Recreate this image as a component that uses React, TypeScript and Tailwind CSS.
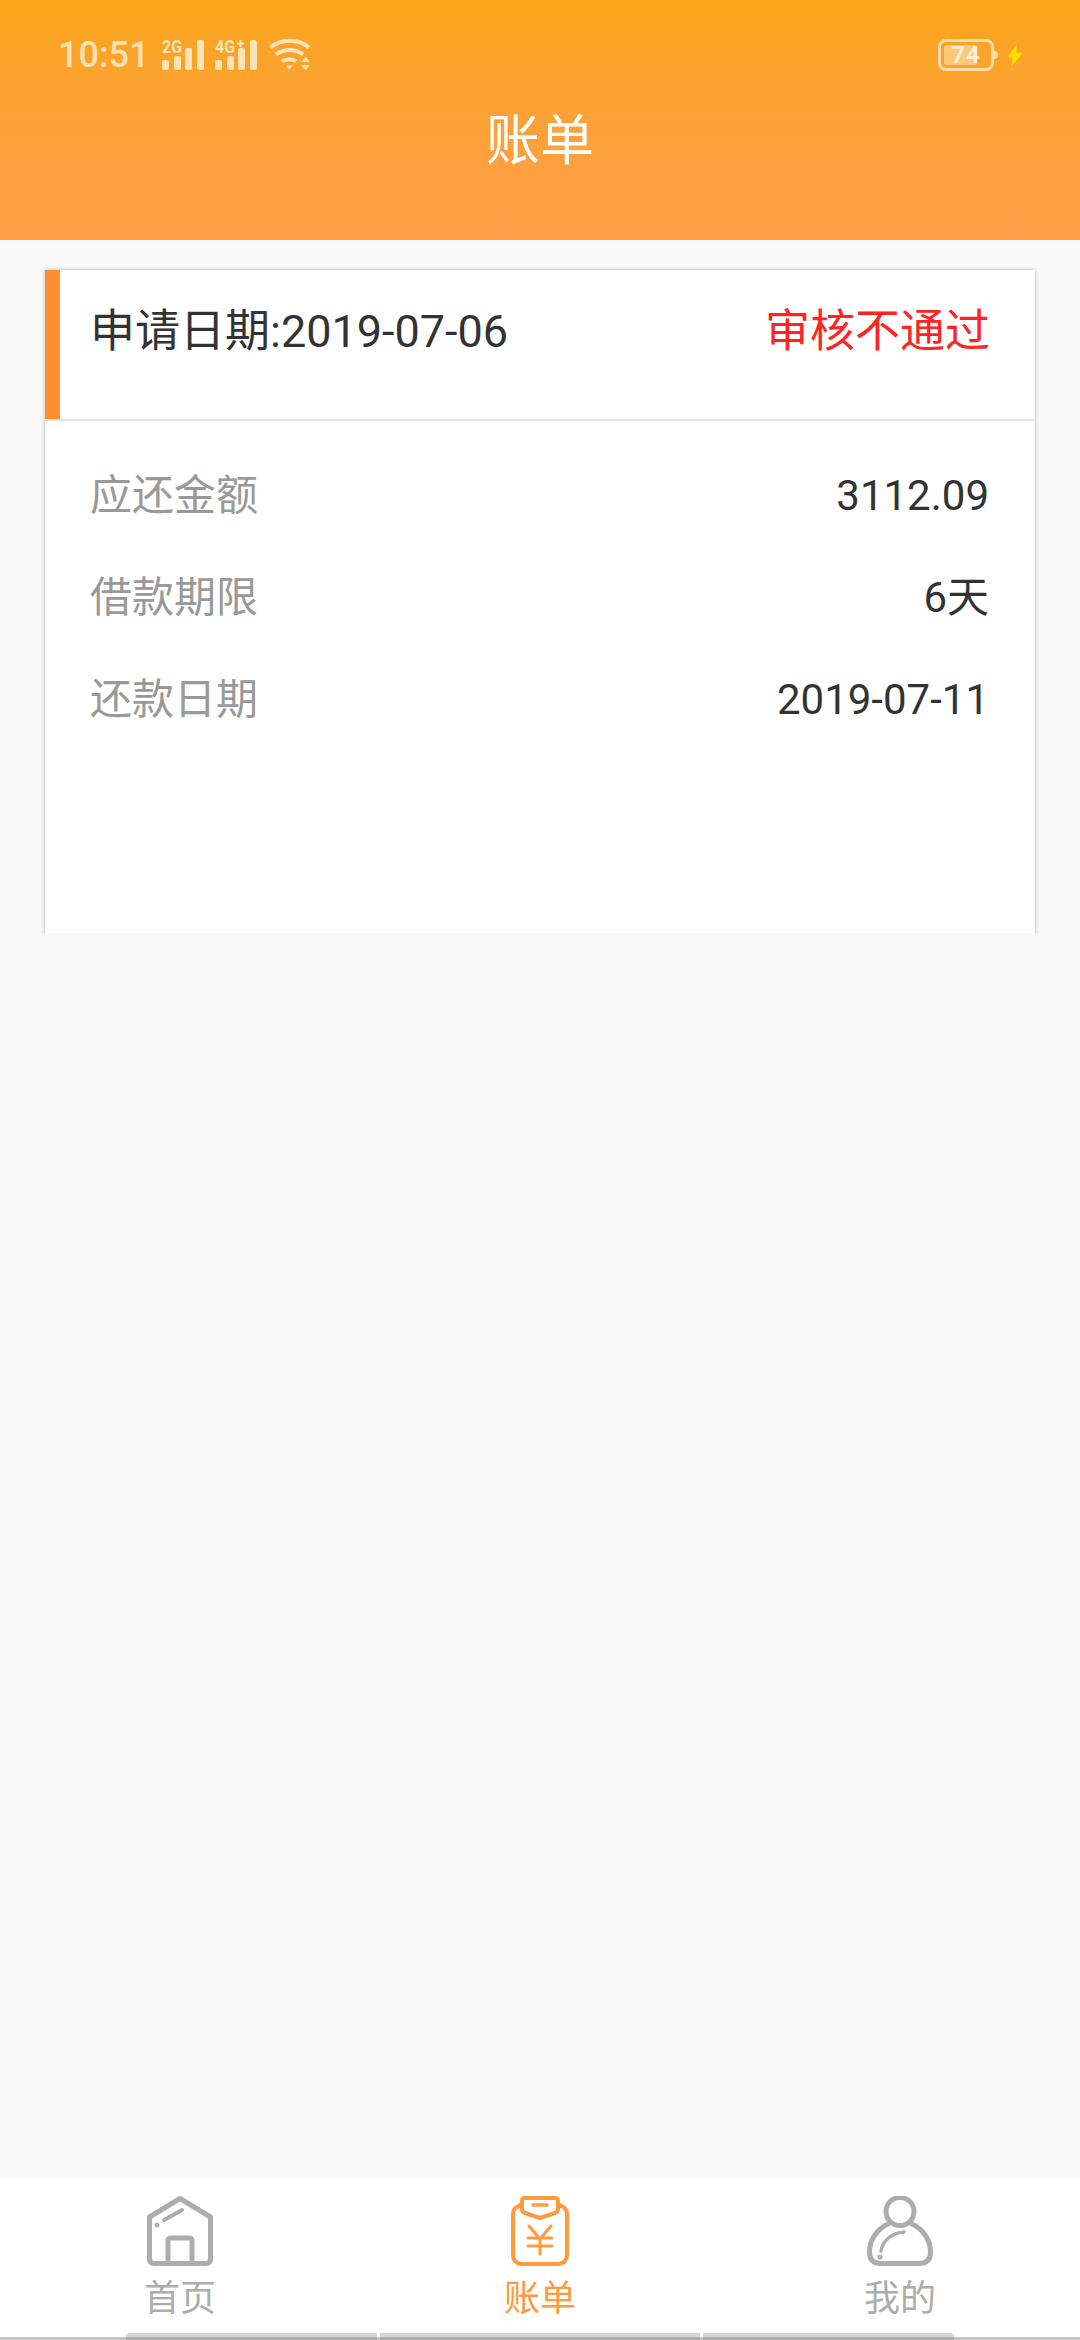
const font = { fontFamily: 'Roboto, "Noto Sans CJK SC", sans-serif' };

function Signal({ label, plus }: { label: string; plus?: boolean }) {
  return (
    <svg width="42" height="32" viewBox="0 0 42 32" fill="#ffe3b8" className="overflow-visible">
      <text x="0" y="13.500" fontSize="18" fontWeight="700" fontFamily="Roboto, sans-serif" textLength="20" lengthAdjust="spacingAndGlyphs">{label}</text>
      {plus && <path d="M22 3.500h2.500V1h2v2.500H29v2h-2.500V8h-2V5.500H22z" />}
      <rect x="0" y="21" width="7" height="10" rx="2" />
      <rect x="12" y="17" width="7" height="14" rx="2" />
      <rect x="23" y="9" width="7" height="22" rx="2" />
      <rect x="35" y="1" width="7" height="30" rx="2" />
    </svg>
  );
}

function Wifi() {
  return (
    <svg width="42" height="36" viewBox="0 0 42 36" fill="none" stroke="#ffe3b8" strokeWidth="4">
      <path d="M1.500 10.500C12 1.500 29 1.500 40 10.500" />
      <path d="M7 17.500C15 11.500 26 11.500 34 17.500" />
      <path d="M13 24.500C17 21.500 23 21.500 27 24.500" />
      <path d="M17 28.500h7l-3.500 4z" fill="#ffe3b8" stroke="none" />
      <path d="M32 25l4.500-5 4.500 5zM32 28h9l-4.500 5z" fill="#ffe3b8" stroke="none" />
    </svg>
  );
}

function Battery() {
  return (
    <div className="flex items-center">
      <div className="relative flex h-[32px] w-[56px] items-center justify-center rounded-[8px] border-[3px] border-[#ffdca8]">
        <div className="absolute left-[3px] top-[3px] h-[20px] w-[33px] rounded-[2px] bg-[#ffc778]" />
        <span className="relative text-[24px] font-bold leading-none tracking-[1px] text-[#fff0d8]">74</span>
      </div>
      <div className="h-[8px] w-[4px] rounded-r-full bg-[#ffdca8]" />
      <svg className="ml-[9px]" width="16" height="23" viewBox="0 0 17 24" fill="#ffde00">
        <path d="M10.500 0 0 14h6l-1.500 10L17 9h-7z" />
      </svg>
    </div>
  );
}

function HomeIcon() {
  return (
    <svg width="66" height="70" viewBox="0 0 66 70" fill="none" stroke="#adadad" strokeWidth="5" strokeLinecap="round" strokeLinejoin="round">
      <path d="M33 2.500 2.500 21v42q0 4.500 4.500 4.500h52q4.500 0 4.500-4.500V21z" />
      <path d="M21 67V45q0-3 3-3h18q3 0 3 3v22" />
      <path d="M17 24 35 14" strokeWidth="4" />
      <circle cx="10" cy="29" r="1" strokeWidth="3" />
    </svg>
  );
}

function BillIcon() {
  return (
    <svg width="58" height="70" viewBox="0 0 58 70" fill="none" stroke="#ff9a3f" strokeWidth="4" strokeLinecap="round" strokeLinejoin="round">
      <path d="M11 8 6 11q-4 2-4 7v40q0 10 10 10h34q10 0 10-10V18q0-5-4-7l-5-3" />
      <path d="M14 2q-3 0-3 3v8q0 3 3 4l15 5 15-5q3-1 3-4V5q0-3-3-3z" />
      <path d="M22 9h14" strokeWidth="3.500" />
      <path d="M18 30 29 43 40 30M29 43v15M17 42h24M17 50h24" strokeWidth="3" />
    </svg>
  );
}

function UserIcon() {
  return (
    <svg width="66" height="70" viewBox="0 0 66 70" fill="none" stroke="#adadad" strokeWidth="5" strokeLinecap="round">
      <circle cx="33" cy="15.500" r="14" />
      <path d="M21 28C10 33 2.500 44 2.500 56q0 11.500 11.500 11.500h38q11.500 0 11.500-11.500C63.500 44 56 33 45 28" />
      <path d="M37 36C25 37 16 44 14 55" strokeWidth="3.500" />
      <circle cx="13" cy="61" r="1" strokeWidth="3" />
    </svg>
  );
}

function Row({ label, value }: { label: string; value: string }) {
  return (
    <div className="flex h-[102px] items-center justify-between">
      <span className="text-[#999999]">{label}</span>
      <span className="text-[#333333]">{value}</span>
    </div>
  );
}

function Tab({ label, active, icon }: { label: string; active?: boolean; icon: React.ReactNode }) {
  return (
    <div className="flex flex-col items-center">
      <div className="flex h-[70px] items-center">{icon}</div>
      <span className={`mt-[10px] text-[36px] leading-[46px] ${active ? 'text-[#ff9a3f]' : 'text-[#adadad]'}`}>{label}</span>
    </div>
  );
}

export default function App() {
  return (
    <div style={font} className="flex h-[2340px] w-[1080px] flex-col overflow-hidden bg-[#f9f9f9]">
      <header className="h-[240px] shrink-0 bg-gradient-to-b from-[#f9a517] to-[#ff9e4a]">
        <div className="flex h-[110px] items-center justify-between pl-[58px] pr-[57px]">
          <div className="flex items-center">
            <span className="text-[36px] font-medium leading-none text-[#ffdfb0]">10:51</span>
            <div className="ml-[13px]"><Signal label="2G" /></div>
            <div className="ml-[11px]"><Signal label="4G" plus /></div>
            <div className="ml-[12px]"><Wifi /></div>
          </div>
          <Battery />
        </div>
        <h1 className="mt-[2px] text-center text-[54px] font-normal leading-[60px] text-white">账单</h1>
      </header>

      <main className="flex-1">
        <div className="h-[693px] overflow-hidden px-[45px] pt-[30px]">
          <section className="h-[700px] bg-white shadow-[0_0_4px_rgba(0,0,0,0.28)]">
            <div className="flex h-[151px] border-b-2 border-[#e6e6e6]">
              <div className="w-[15px] bg-[#ff8f2d]" />
              <div className="flex h-[124px] flex-1 items-center justify-between pl-[30px] pr-[45px] text-[45px] leading-[60px]">
                <span className="text-[#333333]">申请日期:2019-07-06</span>
                <span className="text-[#ff2323]">审核不通过</span>
              </div>
            </div>
            <div className="px-[45px] pt-[23px] pr-[46px] text-[42px]">
              <Row label="应还金额" value="3112.09" />
              <Row label="借款期限" value="6天" />
              <Row label="还款日期" value="2019-07-11" />
            </div>
          </section>
        </div>
      </main>

      <nav className="relative h-[162px] shrink-0 bg-white">
        <div className="grid grid-cols-3 pt-[18px]">
          <div className="flex justify-center"><Tab label="首页" icon={<HomeIcon />} /></div>
          <div className="flex justify-center"><Tab label="账单" active icon={<BillIcon />} /></div>
          <div className="flex justify-center"><Tab label="我的" icon={<UserIcon />} /></div>
        </div>
        <div className="absolute inset-x-0 bottom-0 h-[7px]">
          <div className="absolute inset-x-0 bottom-0 h-[3px] bg-[#c4c4c4]" />
          <div className="absolute bottom-0 left-[126px] h-[7px] w-[251px] rounded-tl-[4px] border-t-[4px] border-[#d6d6d6] bg-[#acacac]" />
          <div className="absolute bottom-0 left-[380px] h-[7px] w-[320px] border-t-[4px] border-[#d6d6d6] bg-[#acacac]" />
          <div className="absolute bottom-0 left-[703px] h-[7px] w-[251px] rounded-tr-[4px] border-t-[4px] border-[#d6d6d6] bg-[#acacac]" />
        </div>
      </nav>
    </div>
  );
}
